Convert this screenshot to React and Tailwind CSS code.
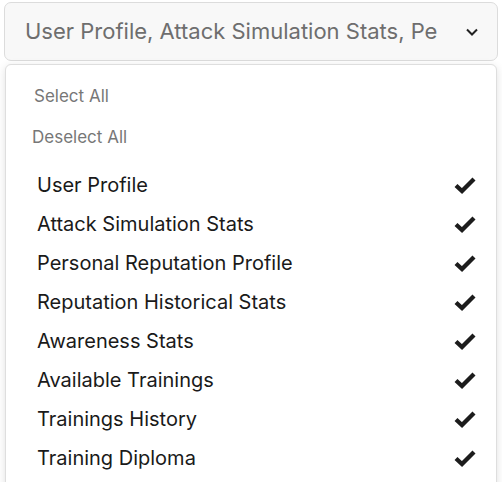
import React from "react";

const items = [
  "User Profile",
  "Attack Simulation Stats",
  "Personal Reputation Profile",
  "Reputation Historical Stats",
  "Awareness Stats",
  "Available Trainings",
  "Trainings History",
  "Training Diploma",
];

function Check() {
  return (
    <svg width="22" height="18" viewBox="0 0 22 18">
      <path d="M2 9.5 L8 15 L20 3" fill="none" stroke="#1c1c1c" strokeWidth="4.3" strokeLinecap="butt" strokeLinejoin="miter" />
    </svg>
  );
}

export default function App() {
  return (
    <div className="w-[502px] h-[482px] bg-white overflow-hidden relative" style={{ fontFamily: "Inter, 'Noto Sans', sans-serif" }}>
      <div className="mx-[4px] mt-[2px] h-[59px] rounded-[7px] border border-[#dcdcdc] bg-[#f8f8f8] flex items-center pl-[20px] pr-[18px]">
        <div className="flex-1 overflow-hidden whitespace-nowrap text-[22px] text-[#6e6e6e] mr-[28px]">
          User Profile, Attack Simulation Stats, Personal Reputation Profile
        </div>
        <svg width="14" height="10" viewBox="0 0 14 10">
          <path d="M2 2.5 L7 7.5 L12 2.5" fill="none" stroke="#222" strokeWidth="2" />
        </svg>
      </div>
      <div className="absolute left-[5px] top-[64px] w-[492px] h-[430px] rounded-[6px] border border-[#dedede] bg-white shadow-[0_2px_8px_rgba(0,0,0,0.12)]">
        <div className="pt-[11px]">
          <div className="h-[41px] flex items-center pl-[28px] text-[17px] text-[#777]">Select All</div>
          <div className="h-[41px] flex items-center pl-[26px] text-[17px] text-[#777]">Deselect All</div>
        </div>
        <div className="mt-[7px]">
          {items.map((t) => (
            <div key={t} className="h-[39px] flex items-center justify-between pl-[31px] pr-[20px] text-[20px] text-[#1a1a1a]">
              <span>{t}</span>
              <Check />
            </div>
          ))}
        </div>
      </div>
    </div>
  );
}
